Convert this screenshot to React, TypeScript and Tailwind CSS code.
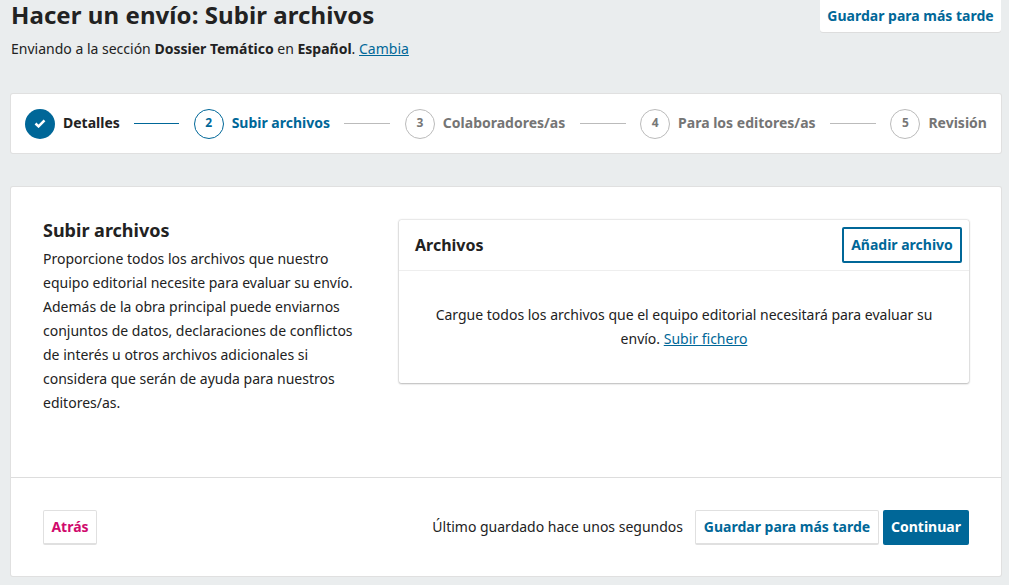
const steps = [
  { n: "2", label: "Subir archivos", state: "current" },
  { n: "3", label: "Colaboradores/as", state: "todo" },
  { n: "4", label: "Para los editores/as", state: "todo" },
  { n: "5", label: "Revisión", state: "todo" },
];

export default function App() {
  return (
    <div className="h-[585px] overflow-hidden bg-[#eaedee] pl-[10px] text-sm leading-6 text-[#222222] font-['Noto_Sans',sans-serif]">
      <div className="flex justify-between items-start pl-px pr-[8px]">
        <div>
          <h1 className="text-2xl leading-[30px] font-bold tracking-[0.07px]">Hacer un envío: Subir archivos</h1>
          <p className="mt-[7px] leading-[24px]">
            Enviando a la sección <b>Dossier Temático</b> en <b>Español</b>.{" "}
            <a href="#" className="text-[#006798] underline">Cambia</a>
          </p>
        </div>
        <button className="h-[32px] w-[181px] rounded-b-[3px] bg-white font-bold text-[#006798] shadow-[0_1px_0_#dddddd]">
          Guardar para más tarde
        </button>
      </div>

      <div className="mt-[33px] ml-px mr-[8px] flex h-[59px] items-center justify-between rounded-[2px] bg-white pl-[14px] pr-[14px] shadow-[0_0_0_1px_#e0e0e0]">
        <div className="flex items-center">
          <span className="flex size-[30px] items-center justify-center rounded-full bg-[#006798]">
            <svg viewBox="0 0 12 10" className="h-[9px] w-[12px]" fill="none" stroke="white" strokeWidth="2.8">
              <path d="M1 5l3.4 3.2L11 1.5" />
            </svg>
          </span>
          <span className="ml-[8px] pb-[2px] font-bold">Detalles</span>
        </div>
        <span className="h-px w-[45px] bg-[#006798]" />
        {steps.map((s, i) => (
          <div key={s.n} className="contents">
            <div className="flex items-center">
              <span
                className={
                  s.state === "current"
                    ? "flex size-[30px] items-center justify-center rounded-full border border-[#006798] pb-px text-xs font-bold text-[#006798]"
                    : "flex size-[30px] items-center justify-center rounded-full border border-[#bbbbbb] pb-px text-xs font-bold text-[#777777]"
                }
              >
                {s.n}
              </span>
              <span className={s.state === "current" ? "ml-[8px] pb-[2px] font-bold text-[#006798]" : "ml-[8px] pb-[2px] font-bold text-[#757575]"}>
                {s.label}
              </span>
            </div>
            {i < steps.length - 1 && <span className="h-px w-[46px] bg-[#bbbbbb]" />}
          </div>
        ))}
      </div>

      <div className="mt-[34px] ml-px mr-[8px] h-[389px] rounded-[2px] bg-white shadow-[0_0_0_1px_#e0e0e0]">
        <div className="flex h-[290px] items-start pl-[32px] pr-[32px] pt-[28px]">
          <div className="w-[324px] shrink-0">
            <h2 className="mb-[2px] text-lg leading-[30px] font-bold">Subir archivos</h2>
            <p>
              Proporcione todos los archivos que nuestro equipo editorial necesite para evaluar su envío. Además de la obra principal puede enviarnos conjuntos de datos, declaraciones de conflictos de interés u otros archivos adicionales si considera que serán de ayuda para nuestros editores/as.
            </p>
          </div>
          <div className="ml-[32px] mt-[5px] w-[570px] rounded-[2px] bg-white shadow-[0_0_2px_rgba(0,0,0,0.3),0_1px_2px_rgba(0,0,0,0.2)]">
            <div className="flex h-[51px] items-center justify-between border-b border-[#eeeeee] pl-[16px] pr-[7px]">
              <h3 className="text-base font-bold">Archivos</h3>
              <button className="h-[36px] w-[120px] rounded-[2px] border-2 border-[#006798] font-bold text-[#006798]">
                Añadir archivo
              </button>
            </div>
            <p className="px-[32px] pt-[32px] pb-[32px] text-center">
              Cargue todos los archivos que el equipo editorial necesitará para evaluar su envío.{" "}
              <a href="#" className="text-[#006798] underline">Subir fichero</a>
            </p>
          </div>
        </div>
        <div className="flex h-[99px] items-center justify-between border-t border-[#dddddd] px-[32px]">
          <button className="h-[35px] w-[54px] rounded-[2px] border border-[#e0e0e0] border-b-2 font-bold text-[#d00a6c]">
            Atrás
          </button>
          <div className="flex items-center">
            <span className="mr-[12px]">Último guardado hace unos segundos</span>
            <button className="h-[35px] w-[184px] rounded-[2px] border border-[#e0e0e0] border-b-2 font-bold text-[#006798]">
              Guardar para más tarde
            </button>
            <button className="ml-[4px] h-[35px] w-[86px] rounded-[2px] bg-[#006798] font-bold text-white">
              Continuar
            </button>
          </div>
        </div>
      </div>
    </div>
  );
}
